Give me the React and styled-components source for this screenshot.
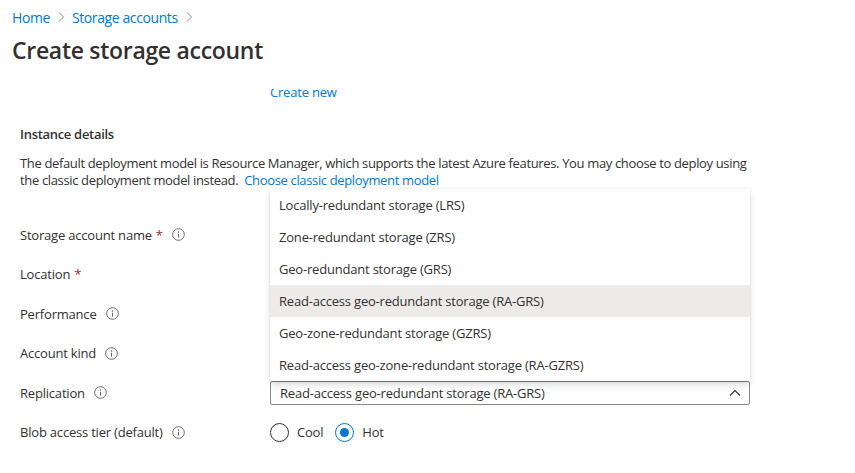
import React from "react";
import styled, { createGlobalStyle } from "styled-components";

const Global = createGlobalStyle`
  html, body { margin: 0; padding: 0; background: #ffffff; }
  body {
    font-family: "Segoe UI", "Open Sans", "Noto Sans", sans-serif;
    color: #323130;
    -webkit-font-smoothing: antialiased;
  }
  * { box-sizing: border-box; }
`;

const Page = styled.div`
  width: 855px;
  height: 473px;
  display: flex;
  flex-direction: column;
  overflow: hidden;
`;

const Header = styled.header`
  height: 89px;
  flex: none;
  padding: 8px 12px 0;
  display: flex;
  flex-direction: column;
`;

const Breadcrumb = styled.nav`
  display: flex;
  align-items: center;
  gap: 5px;
  height: 18px;
  font-size: 14px;
  letter-spacing: -0.4px;
`;

const Crumb = styled.a`
  color: #0078d4;
  text-decoration: none;
`;

const Sep = styled.span`
  display: inline-flex;
  color: #8a8886;
`;

const Title = styled.h1`
  margin: 10px 0 0;
  font-size: 23px;
  line-height: 28px;
  font-weight: 600;
  letter-spacing: -0.3px;
  color: #323130;
`;

const Body = styled.main`
  flex: 1;
  overflow: hidden;
  padding: 0 20px;
  font-size: 13px;
  letter-spacing: -0.2px;
`;

const Content = styled.div`
  margin-top: -6px;
`;

const LinkRow = styled.div`
  padding-left: 250px;
  line-height: 18px;
`;

const Link = styled.a`
  color: #0078d4;
  text-decoration: none;
`;

const SectionTitle = styled.h2`
  margin: 24px 0 0;
  font-size: 13px;
  line-height: 18px;
  font-weight: 600;
  letter-spacing: -0.3px;
  color: #323130;
`;

const Paragraph = styled.p`
  margin: 11.5px 0 0;
  width: 740px;
  line-height: 17px;
  letter-spacing: -0.35px;
`;

const Form = styled.div`
  margin-top: 30px;
  display: grid;
  grid-template-columns: 250px 480px;
  grid-auto-rows: 32px;
  row-gap: 7.5px;
`;

const Label = styled.div`
  display: flex;
  align-items: center;
  gap: 9px;
  white-space: nowrap;
`;

const Req = styled.span`
  color: #a4262c;
  margin-left: 4px;
`;

const Field = styled.div`
  position: relative;
  display: flex;
  align-items: center;
`;

const SelectBox = styled.div`
  width: 100%;
  height: 24px;
  margin-top: 1px;
  border: 1px solid #8a8886;
  border-radius: 2px;
  display: flex;
  align-items: center;
  justify-content: space-between;
  padding: 0 8px 0 9px;
  background: #fff;
`;

const Menu = styled.ul`
  position: absolute;
  left: 0;
  right: 0;
  bottom: calc(50% + 11.5px);
  margin: 0;
  padding: 0;
  list-style: none;
  background: #fff;
  border-radius: 2px;
  box-shadow: 0 3.2px 7.2px rgba(0, 0, 0, 0.132), 0 0.6px 1.8px rgba(0, 0, 0, 0.108);
  z-index: 2;
`;

const Option = styled.li`
  height: 32px;
  display: flex;
  align-items: center;
  padding: 0 8px 0 9px;
  background: ${(p) => (p.$selected ? "#edebe9" : "#fff")};
  color: #323130;
`;

const Radios = styled.div`
  display: flex;
  align-items: center;
  gap: 12px;
`;

const RadioItem = styled.label`
  display: flex;
  align-items: center;
  gap: 8px;
`;

const RadioCircle = styled.span`
  width: 19px;
  height: 19px;
  border-radius: 50%;
  border: 1px solid ${(p) => (p.$checked ? "#0078d4" : "#323130")};
  display: inline-flex;
  align-items: center;
  justify-content: center;
  &::after {
    content: "";
    width: 9px;
    height: 9px;
    border-radius: 50%;
    background: ${(p) => (p.$checked ? "#0078d4" : "transparent")};
  }
`;

const Chevron = ({ up }) => (
  <svg width="12" height="12" viewBox="0 0 12 12" fill="none">
    {up ? (
      <path d="M1 8.5 L6 3.5 L11 8.5" stroke="#323130" strokeWidth="1.1" />
    ) : (
      <path d="M4 1.5 L8.5 6 L4 10.5" stroke="currentColor" strokeWidth="1" />
    )}
  </svg>
);

const InfoIcon = () => (
  <svg width="13" height="13" viewBox="0 0 13 13" fill="none">
    <circle cx="6.5" cy="6.5" r="5.8" stroke="#605e5c" strokeWidth="0.9" />
    <circle cx="6.5" cy="4" r="0.7" fill="#605e5c" />
    <path d="M6.5 5.8 V9.6" stroke="#605e5c" strokeWidth="1" />
  </svg>
);

const options = [
  "Locally-redundant storage (LRS)",
  "Zone-redundant storage (ZRS)",
  "Geo-redundant storage (GRS)",
  "Read-access geo-redundant storage (RA-GRS)",
  "Geo-zone-redundant storage (GZRS)",
  "Read-access geo-zone-redundant storage (RA-GZRS)",
];

export default function App() {
  return (
    <Page>
      <Global />
      <Header>
        <Breadcrumb>
          <Crumb>Home</Crumb>
          <Sep><Chevron /></Sep>
          <Crumb>Storage accounts</Crumb>
          <Sep><Chevron /></Sep>
        </Breadcrumb>
        <Title>Create storage account</Title>
      </Header>
      <Body>
        <Content>
          <LinkRow>
            <Link>Create new</Link>
          </LinkRow>
          <SectionTitle>Instance details</SectionTitle>
          <Paragraph>
            The default deployment model is Resource Manager, which supports the latest Azure features. You may choose to deploy using the classic deployment model instead.&nbsp;&nbsp;
            <Link>Choose classic deployment model</Link>
          </Paragraph>
          <Form>
            <Label>
              <span>Storage account name<Req>*</Req></span>
              <InfoIcon />
            </Label>
            <Field />
            <Label>
              <span>Location<Req>*</Req></span>
            </Label>
            <Field />
            <Label>
              <span>Performance</span>
              <InfoIcon />
            </Label>
            <Field />
            <Label>
              <span>Account kind</span>
              <InfoIcon />
            </Label>
            <Field />
            <Label>
              <span>Replication</span>
              <InfoIcon />
            </Label>
            <Field>
              <Menu>
                {options.map((o) => (
                  <Option key={o} $selected={o.includes("(RA-GRS)")}>{o}</Option>
                ))}
              </Menu>
              <SelectBox>
                <span>Read-access geo-redundant storage (RA-GRS)</span>
                <Chevron up />
              </SelectBox>
            </Field>
            <Label>
              <span>Blob access tier (default)</span>
              <InfoIcon />
            </Label>
            <Field>
              <Radios>
                <RadioItem>
                  <RadioCircle />
                  <span>Cool</span>
                </RadioItem>
                <RadioItem>
                  <RadioCircle $checked />
                  <span>Hot</span>
                </RadioItem>
              </Radios>
            </Field>
          </Form>
        </Content>
      </Body>
    </Page>
  );
}
